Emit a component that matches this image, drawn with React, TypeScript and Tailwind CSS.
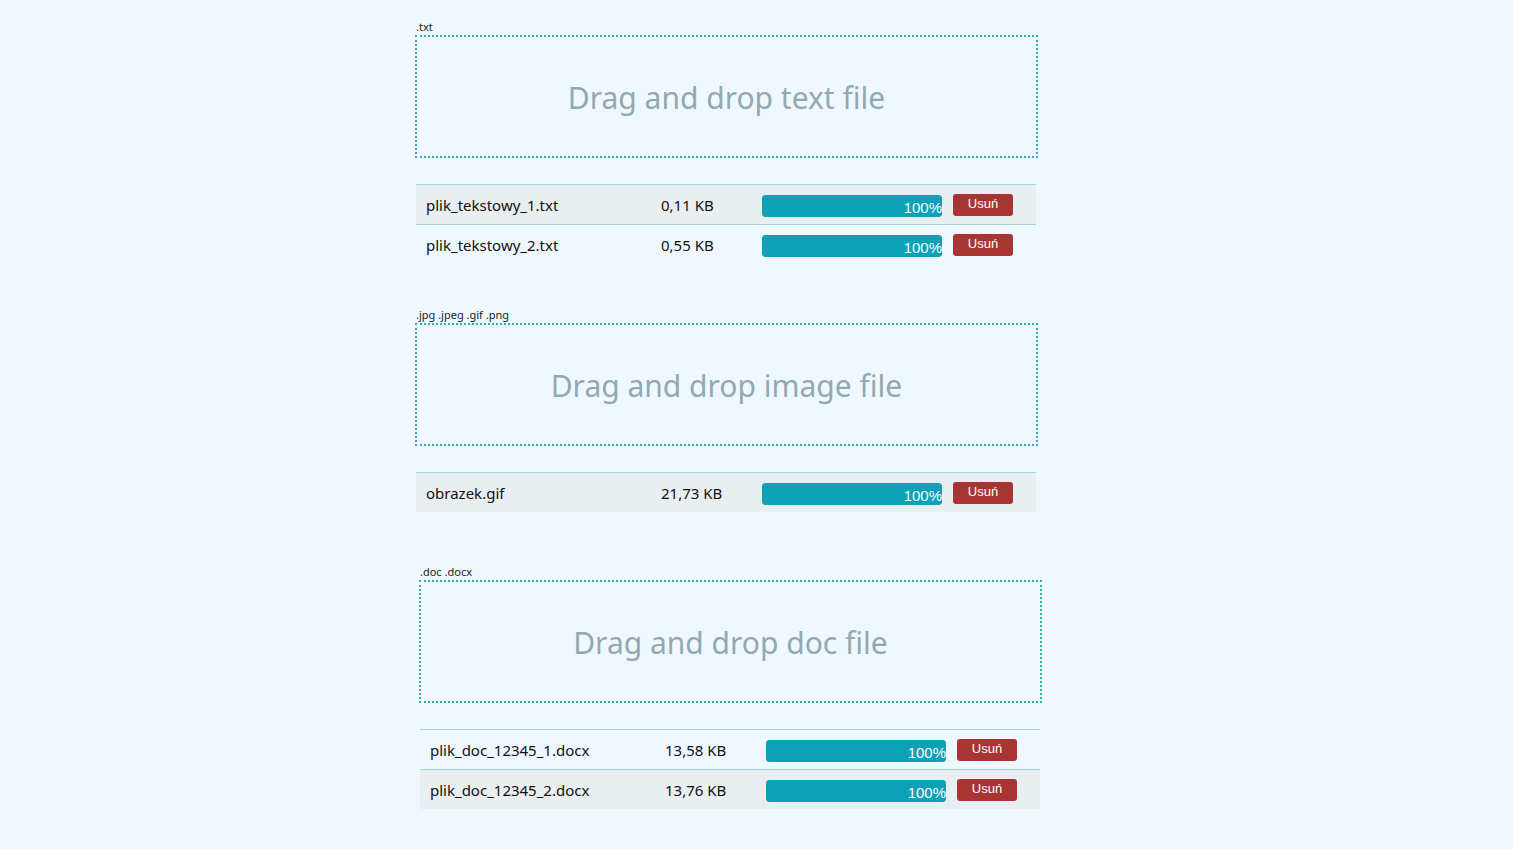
import React from 'react';

interface FileRow {
  name: string;
  size: string;
  progress: number;
}

interface Section {
  label: string;
  title: string;
  files: FileRow[];
  shaded: number[];
  offset: string;
  gap: string;
}

const sections: Section[] = [
  {
    label: '.txt',
    title: 'Drag and drop text file',
    files: [
      { name: 'plik_tekstowy_1.txt', size: '0,11 KB', progress: 100 },
      { name: 'plik_tekstowy_2.txt', size: '0,55 KB', progress: 100 },
    ],
    shaded: [0],
    offset: 'ml-[415px]',
    gap: 'mt-0',
  },
  {
    label: '.jpg .jpeg .gif .png',
    title: 'Drag and drop image file',
    files: [{ name: 'obrazek.gif', size: '21,73 KB', progress: 100 }],
    shaded: [0],
    offset: 'ml-[415px]',
    gap: 'mt-[42px]',
  },
  {
    label: '.doc .docx',
    title: 'Drag and drop doc file',
    files: [
      { name: 'plik_doc_12345_1.docx', size: '13,58 KB', progress: 100 },
      { name: 'plik_doc_12345_2.docx', size: '13,76 KB', progress: 100 },
    ],
    shaded: [1],
    offset: 'ml-[419px]',
    gap: 'mt-[51px]',
  },
];

const UploadSection: React.FC<{ section: Section }> = ({ section }) => (
  <div className={`${section.offset} ${section.gap} w-[623px]`}>
    {/* accepted extensions */}
    <div className="h-[17px] pl-px text-[11px] leading-[17px] text-[#222]">{section.label}</div>
    {/* drop zone */}
    <div className="h-[123px] border-2 border-dotted border-[#3aa8c0] flex items-center justify-center">
      <span className="text-[30px] leading-none text-[#93a9b0] pt-[2px]">{section.title}</span>
    </div>
    {/* file list */}
    <div className="mt-[26px] w-[620px] ml-px">
      {section.files.map((f, idx) => (
        <div
          key={idx}
          className={`h-[40px] border-t border-[#a9d3d9] flex items-center pt-[2px] text-[15px] text-[#111] ${
            section.shaded.includes(idx) ? 'bg-[#e9eef0]' : ''
          }`}
        >
          <span className="w-[245px] pl-[10px] shrink-0">{f.name}</span>
          <span className="w-[101px] shrink-0">{f.size}</span>
          <div className="w-[180px] h-[22px] rounded-[3px] bg-[#dfe6e8] overflow-hidden shrink-0">
            <div
              className="h-full bg-[#0ba2b6] rounded-[3px] flex items-end justify-end text-white text-[15px] leading-[19px]"
              style={{ fontFamily: '"Liberation Sans", Arial, sans-serif', width: `${f.progress}%` }}
            >
              {f.progress}%
            </div>
          </div>
          <button
            className="ml-[11px] -mt-[2px] w-[60px] h-[22px] rounded-[3px] bg-[#a83434] text-white text-[13px] leading-none pb-[2px]"
            style={{ fontFamily: '"Liberation Sans", Arial, sans-serif' }}
          >
            Usuń
          </button>
        </div>
      ))}
    </div>
  </div>
);

export default function App() {
  return (
    <div className="min-h-[849px] bg-[#f0f8ff] pt-[18px]" style={{ fontFamily: '"Noto Sans", "Open Sans", sans-serif' }}>
      {sections.map((s, i) => (
        <UploadSection key={i} section={s} />
      ))}
    </div>
  );
}
